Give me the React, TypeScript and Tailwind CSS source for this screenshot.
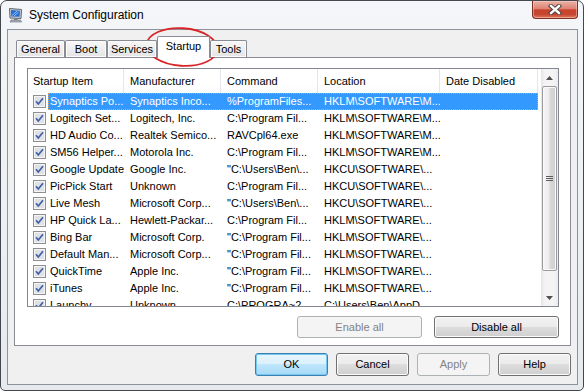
import React from 'react';

const rows: string[][] = [
  ['Synaptics Po...', 'Synaptics Inco...', '%ProgramFiles...', 'HKLM\\SOFTWARE\\M...'],
  ['Logitech Set...', 'Logitech, Inc.', 'C:\\Program Fil...', 'HKLM\\SOFTWARE\\M...'],
  ['HD Audio Co...', 'Realtek Semico...', 'RAVCpl64.exe', 'HKLM\\SOFTWARE\\M...'],
  ['SM56 Helper...', 'Motorola Inc.', 'C:\\Program Fil...', 'HKLM\\SOFTWARE\\M...'],
  ['Google Update', 'Google Inc.', '"C:\\Users\\Ben\\...', 'HKCU\\SOFTWARE\\...'],
  ['PicPick Start', 'Unknown', 'C:\\Program Fil...', 'HKCU\\SOFTWARE\\...'],
  ['Live Mesh', 'Microsoft Corp...', '"C:\\Users\\Ben\\...', 'HKCU\\SOFTWARE\\...'],
  ['HP Quick La...', 'Hewlett-Packar...', 'C:\\Program Fil...', 'HKLM\\SOFTWARE\\...'],
  ['Bing Bar', 'Microsoft Corp.', '"C:\\Program Fil...', 'HKLM\\SOFTWARE\\...'],
  ['Default Man...', 'Microsoft Corp...', '"C:\\Program Fil...', 'HKLM\\SOFTWARE\\...'],
  ['QuickTime', 'Apple Inc.', '"C:\\Program Fil...', 'HKLM\\SOFTWARE\\...'],
  ['iTunes', 'Apple Inc.', '"C:\\Program Fil...', 'HKLM\\SOFTWARE\\...'],
  ['Launchy', 'Unknown', 'C:\\PROGRA~2...', 'C:\\Users\\Ben\\AppD...'],
];

function MonitorIcon() {
  return (
    <svg width="16" height="16" viewBox="0 0 16 16">
      <path d="M1.5 1.5 L13.5 2.5 L13 11.5 L2 11 Z" fill="#c8cdd4" stroke="#5f6670" strokeWidth="1" />
      <path d="M3 3 L12 3.8 L11.6 9.8 L3.2 9.4 Z" fill="#2a6dd1" />
      <path d="M4 8.5 L9 4 M6 9 L10.5 5" stroke="#9cc7ff" strokeWidth="0.9" />
      <rect x="6" y="11.5" width="3.5" height="1.5" fill="#7d848d" />
      <path d="M3 13 L12.5 13 L13.5 15 L2 15 Z" fill="#aeb4bb" stroke="#666c74" strokeWidth="0.6" />
    </svg>
  );
}

function CloseGlyph() {
  return (
    <svg width="14" height="11" viewBox="0 0 14 11">
      <path d="M3 2 L11 9 M11 2 L3 9" stroke="#3a3a3a" strokeWidth="4.2" strokeLinecap="square" />
      <path d="M3 2 L11 9 M11 2 L3 9" stroke="#ffffff" strokeWidth="2.4" strokeLinecap="square" />
    </svg>
  );
}

function CheckBox() {
  return (
    <svg width="13" height="13" viewBox="0 0 13 13" className="shrink-0">
      <rect x="0.5" y="0.5" width="12" height="12" fill="#f4f4f4" stroke="#8e8f8f" />
      <rect x="2" y="2" width="9" height="9" fill="#dfe1e4" />
      <path d="M3 6.3 L5.3 9 L10 3.2" stroke="#3f5fa8" strokeWidth="1.7" fill="none" />
    </svg>
  );
}

function Tab({ label, w, selected }: { label: string; w: string; selected?: boolean }) {
  if (selected) {
    return (
      <div className={`${w} h-[22px] -mb-px border border-b-0 border-[#898c95] bg-white flex items-center justify-center pb-[3px] rounded-t-[2px]`}>
        {label}
      </div>
    );
  }
  return (
    <div className={`${w} h-[17px] border border-b-0 border-[#898c95] bg-[linear-gradient(#f7f7f7,#e4e4e4)] shadow-[inset_0_0_0_1px_#fcfcfc] flex items-center justify-center pt-[1px] rounded-t-[2px]`}>
      {label}
    </div>
  );
}

function WinButton({ label, w, kind }: { label: string; w: string; kind?: 'default' | 'disabled' }) {
  if (kind === 'default') {
    return (
      <div className={`${w} h-[23px] rounded-[3px] border border-[#3c7fb1] bg-[linear-gradient(#eaf6fd_0%,#d9f0fc_50%,#bee6fd_50%,#a7d9f5_100%)] shadow-[inset_0_0_0_1px_#74c9f2] flex items-center justify-center`}>
        {label}
      </div>
    );
  }
  if (kind === 'disabled') {
    return (
      <div className={`${w} h-[23px] rounded-[3px] border border-[#adb2b5] bg-[#f4f4f4] text-[#838383] flex items-center justify-center`}>
        {label}
      </div>
    );
  }
  return (
    <div className={`${w} h-[23px] rounded-[3px] border border-[#707070] bg-[linear-gradient(#f2f2f2_0%,#ebebeb_50%,#dddddd_50%,#cfcfcf_100%)] shadow-[inset_0_0_0_1px_#fcfcfc] flex items-center justify-center`}>
      {label}
    </div>
  );
}

export default function App() {
  return (
    <div className="relative w-[585px] h-[391px] bg-white overflow-hidden font-['Liberation_Sans',Arial,sans-serif] text-[11px] text-black">
      <div className="w-[584px] h-[391px] rounded-t-[7px] rounded-b-[5px] border border-[#43484e] bg-[linear-gradient(to_bottom,#f4f6f9,#e6eaef)] flex flex-col">
        {/* title bar */}
        <div className="h-[28px] flex items-start shrink-0">
          <div className="ml-[7px] mt-[6px] w-[16px] h-[16px]">
            <MonitorIcon />
          </div>
          <div className="ml-[5px] mt-[6px] text-[12px] leading-[16px]">System Configuration</div>
          <div className="ml-auto mr-[5px] w-[46px] h-[18px] rounded-b-[4px] border border-t-0 border-[#7a3024] bg-[linear-gradient(to_bottom,#ebb2a5_0%,#df8373_45%,#c9432f_52%,#c64530_78%,#e07a5e_100%)] shadow-[inset_0_0_0_1px_rgba(255,220,210,0.45)] flex items-center justify-center">
            <CloseGlyph />
          </div>
        </div>

        {/* client area */}
        <div className="ml-[6px] mr-[5px] h-[356px] border border-[#8d939b] bg-[#f0f0f0] flex flex-col px-[6px] pt-[6px]">
          {/* tab strip */}
          <div className="h-[21px] flex items-end pl-[2px] relative z-10">
            <Tab label="General" w="w-[49px]" />
            <Tab label="Boot" w="w-[42px]" />
            <Tab label="Services" w="w-[50px]" />
            <Tab label="Startup" w="w-[53px]" selected />
            <Tab label="Tools" w="w-[37px]" />
          </div>

          {/* tab panel */}
          <div className="h-[289px] border border-[#898c95] bg-white pl-[12px] pt-[10px] flex flex-col">
            {/* list view */}
            <div className="w-[532px] h-[239px] border border-[#828790] bg-white flex">
              <div className="w-[513px] flex flex-col overflow-hidden">
                {/* header */}
                <div className="h-[24px] flex shrink-0 bg-[linear-gradient(#ffffff,#ffffff_70%,#f7f8f9)]">
                  <div className="w-[96px] pl-[5px] border-r border-[#e3e6ea] flex items-center">Startup Item</div>
                  <div className="w-[97px] pl-[6px] border-r border-[#e3e6ea] flex items-center">Manufacturer</div>
                  <div className="w-[97px] pl-[6px] border-r border-[#e3e6ea] flex items-center">Command</div>
                  <div className="w-[122px] pl-[6px] border-r border-[#e3e6ea] flex items-center">Location</div>
                  <div className="w-[98px] pl-[6px] border-r border-[#e3e6ea] flex items-center">Date Disabled</div>
                </div>
                {/* rows */}
                {rows.map((r, i) => {
                  const sel = i === 0;
                  return (
                    <div key={i} className="h-[17px] shrink-0 flex items-center">
                      <div className="pl-[5px] pr-[2px] flex items-center">
                        <CheckBox />
                      </div>
                      <div
                        className={`h-[17px] flex items-center whitespace-nowrap leading-[15px] ${
                          sel ? 'bg-[#3399ff] text-white border border-dotted border-[#e8a050]' : 'border border-transparent'
                        }`}
                      >
                        <div className="w-[75px] pl-[1px] overflow-hidden">{r[0]}</div>
                        <div className="w-[97px] pl-[6px] overflow-hidden">{r[1]}</div>
                        <div className="w-[97px] pl-[6px] overflow-hidden">{r[2]}</div>
                        <div className="w-[122px] pl-[6px] overflow-hidden">{r[3]}</div>
                        <div className="w-[97px]"></div>
                      </div>
                    </div>
                  );
                })}
              </div>
              {/* scrollbar */}
              <div className="w-[17px] h-[237px] flex flex-col bg-[linear-gradient(to_right,#e6e6e6,#f4f4f4_25%,#f4f4f4_75%,#ebebeb)]">
                <div className="h-[17px] flex items-center justify-center shrink-0">
                  <svg width="7" height="4" viewBox="0 0 7 4">
                    <path d="M0 4 L3.5 0 L7 4 Z" fill="#4f4f4f" />
                  </svg>
                </div>
                <div className="h-[185px] mx-[1px] rounded-[2px] border border-[#9b9b9b] bg-[linear-gradient(to_right,#f6f6f6,#ececec_45%,#d8d8d8_55%,#cfcfcf)] shadow-[inset_0_0_0_1px_#fafafa] flex items-center justify-center shrink-0">
                  <svg width="7" height="7" viewBox="0 0 7 7">
                    <path d="M0 1.5 H7 M0 3.5 H7 M0 5.5 H7" stroke="#5e5e5e" strokeWidth="1" />
                  </svg>
                </div>
                <div className="h-[18px] shrink-0"></div>
                <div className="h-[17px] flex items-center justify-center shrink-0">
                  <svg width="7" height="4" viewBox="0 0 7 4">
                    <path d="M0 0 L3.5 4 L7 0 Z" fill="#4f4f4f" />
                  </svg>
                </div>
              </div>
            </div>
            {/* enable / disable */}
            <div className="w-[532px] mt-[9px] flex justify-end gap-[12px]">
              <div className="w-[125px] h-[22px] rounded-[3px] border border-[#adb2b5] bg-[#f4f4f4] text-[#838383] flex items-center justify-center">
                Enable all
              </div>
              <div className="w-[125px] h-[22px] rounded-[3px] border border-[#707070] bg-[linear-gradient(#f2f2f2_0%,#ebebeb_50%,#dddddd_50%,#cfcfcf_100%)] shadow-[inset_0_0_0_1px_#fcfcfc] flex items-center justify-center">
                Disable all
              </div>
            </div>
          </div>

          {/* dialog buttons */}
          <div className="mt-[7px] flex justify-end gap-[8px]">
            <WinButton label="OK" w="w-[73px]" kind="default" />
            <WinButton label="Cancel" w="w-[73px]" />
            <WinButton label="Apply" w="w-[73px]" kind="disabled" />
            <WinButton label="Help" w="w-[73px]" />
          </div>
        </div>
      </div>

      {/* red annotation ellipse */}
      <svg className="absolute left-[144px] top-[26px] pointer-events-none" width="76" height="42" viewBox="0 0 76 42">
        <ellipse cx="38" cy="21" rx="35.5" ry="18.8" fill="none" stroke="#d8262a" strokeWidth="1.8" transform="rotate(4 38 21)" />
      </svg>
    </div>
  );
}
